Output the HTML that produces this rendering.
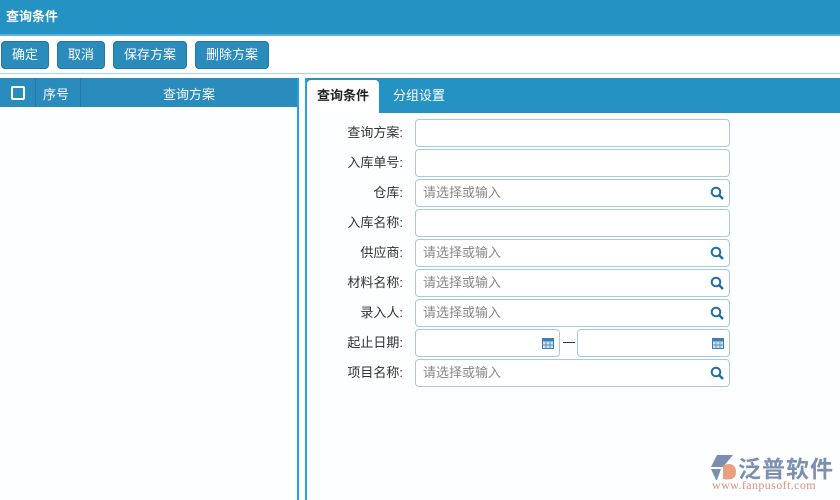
<!DOCTYPE html>
<html><head><meta charset="utf-8"><style>
*{box-sizing:border-box;margin:0;padding:0}
body{width:840px;height:500px;position:relative;background:#fff;font-family:"Liberation Sans","Noto Sans CJK SC",sans-serif;font-size:13px;overflow:hidden;color:#333}
.a{position:absolute}
.hd{left:0;top:0;width:840px;background:#2492c2;border-bottom:2px solid #5cb3dc;color:#fff;font-weight:bold;padding:6px 0 0 6px;height:36px}
.btn{top:41px;height:28px;background:#2a8bbd;border:1px solid #1f77a6;border-radius:4px;color:#fff;text-align:center;line-height:26px;font-size:13px}
.ln{left:0;top:73px;width:840px;height:1px;background:#a9d3ea}
.lp{left:0;top:78px;width:299px;height:422px;border-right:2px solid #28a2dc;background:#fcfeff}
.gh{left:0;top:78px;width:297px;height:29px;background:#2a8bbd;color:#fff}
.rp{left:305px;top:78px;width:535px;height:422px;border-left:2px solid #28a2dc;background:#fcfeff}
.tb{left:307px;top:78px;width:533px;height:35px;background:#2492c2}
.lb{width:100px;left:303px;text-align:right;height:28px;line-height:28px;color:#333}
.in{left:415px;width:315px;height:28px;border:1px solid #a8c8e0;border-radius:4px;background:#fff;color:#888;line-height:26px;padding-left:7px}
.q{position:absolute;right:5px;top:6px}
</style></head><body>
<div class="a hd">查询条件</div>
<div class="a btn" style="left:1px;width:48px">确定</div>
<div class="a btn" style="left:57px;width:48px">取消</div>
<div class="a btn" style="left:113px;width:74px">保存方案</div>
<div class="a btn" style="left:195px;width:74px">删除方案</div>
<div class="a ln"></div>
<div class="a lp"></div>
<div class="a gh">
 <div class="a" style="left:11px;top:8px;width:14px;height:14px;border:2px solid #fff;border-radius:2px"></div>
 <div class="a" style="left:35px;top:0;width:1px;height:29px;background:#2378a6"></div>
 <div class="a" style="left:43px;top:6px">序号</div>
 <div class="a" style="left:80px;top:0;width:1px;height:29px;background:#2378a6"></div>
 <div class="a" style="left:81px;width:216px;top:6px;text-align:center">查询方案</div>
</div>
<div class="a rp"></div>
<div class="a tb">
 <div class="a" style="left:0;top:2px;width:72px;height:33px;background:#fff;border-radius:4px 4px 0 0;color:#222;font-weight:bold;text-align:center;line-height:32px">查询条件</div>
 <div class="a" style="left:86px;top:0;line-height:35px;color:#fff">分组设置</div>
</div>
<div class="a lb" style="top:119px">查询方案:</div><div class="a in" style="top:119px"></div>
<div class="a lb" style="top:149px">入库单号:</div><div class="a in" style="top:149px"></div>
<div class="a lb" style="top:179px">仓库:</div><div class="a in" style="top:179px">请选择或输入<svg class="q" width="14" height="14" viewBox="0 0 14 14"><circle cx="6" cy="6" r="4.3" fill="none" stroke="#1f6fa6" stroke-width="2"/><path d="M9 9l4 4" stroke="#1f6fa6" stroke-width="2.4"/></svg></div>
<div class="a lb" style="top:209px">入库名称:</div><div class="a in" style="top:209px"></div>
<div class="a lb" style="top:239px">供应商:</div><div class="a in" style="top:239px">请选择或输入<svg class="q" width="14" height="14" viewBox="0 0 14 14"><circle cx="6" cy="6" r="4.3" fill="none" stroke="#1f6fa6" stroke-width="2"/><path d="M9 9l4 4" stroke="#1f6fa6" stroke-width="2.4"/></svg></div>
<div class="a lb" style="top:269px">材料名称:</div><div class="a in" style="top:269px">请选择或输入<svg class="q" width="14" height="14" viewBox="0 0 14 14"><circle cx="6" cy="6" r="4.3" fill="none" stroke="#1f6fa6" stroke-width="2"/><path d="M9 9l4 4" stroke="#1f6fa6" stroke-width="2.4"/></svg></div>
<div class="a lb" style="top:299px">录入人:</div><div class="a in" style="top:299px">请选择或输入<svg class="q" width="14" height="14" viewBox="0 0 14 14"><circle cx="6" cy="6" r="4.3" fill="none" stroke="#1f6fa6" stroke-width="2"/><path d="M9 9l4 4" stroke="#1f6fa6" stroke-width="2.4"/></svg></div>
<div class="a lb" style="top:329px">起止日期:</div>
<div class="a in" style="top:329px;width:145px"><svg class="q" style="top:7px" width="12" height="12" viewBox="0 0 12 12"><rect x="0.5" y="1.5" width="11" height="10" fill="#cfe3f2" stroke="#3a7fb5"/><rect x="0.5" y="1.5" width="11" height="3" fill="#3a7fb5"/><path d="M4 5v6M8 5v6M1 8h10" stroke="#3a7fb5" stroke-width="0.8"/></svg></div>
<div class="a" style="left:563px;top:342px;width:12px;height:1px;background:#333"></div>
<div class="a in" style="top:329px;left:577px;width:153px"><svg class="q" style="top:7px" width="12" height="12" viewBox="0 0 12 12"><rect x="0.5" y="1.5" width="11" height="10" fill="#cfe3f2" stroke="#3a7fb5"/><rect x="0.5" y="1.5" width="11" height="3" fill="#3a7fb5"/><path d="M4 5v6M8 5v6M1 8h10" stroke="#3a7fb5" stroke-width="0.8"/></svg></div>
<div class="a lb" style="top:359px">项目名称:</div><div class="a in" style="top:359px">请选择或输入<svg class="q" width="14" height="14" viewBox="0 0 14 14"><circle cx="6" cy="6" r="4.3" fill="none" stroke="#1f6fa6" stroke-width="2"/><path d="M9 9l4 4" stroke="#1f6fa6" stroke-width="2.4"/></svg></div>
<svg class="a" style="left:708px;top:453px" width="32" height="30" viewBox="0 0 32 30"><path d="M9 2h16l-10 12H3z" fill="#7d8fb0"/><path d="M3 16h10l-4 11H8z" fill="#7d8fb0"/><path d="M15 13c6-4 13-2 13 6s-7 8-13 7z" fill="#e8a080"/></svg>
<div class="a" style="left:738px;top:450px;font-size:23px;color:#7d8fb0;font-weight:bold;letter-spacing:1px">泛普软件</div>
<div class="a" style="left:712px;top:478px;font-size:12px;color:#e0907a;font-family:'Liberation Serif',serif;letter-spacing:0.4px">www.fanpusoft.com</div>
</body></html>
